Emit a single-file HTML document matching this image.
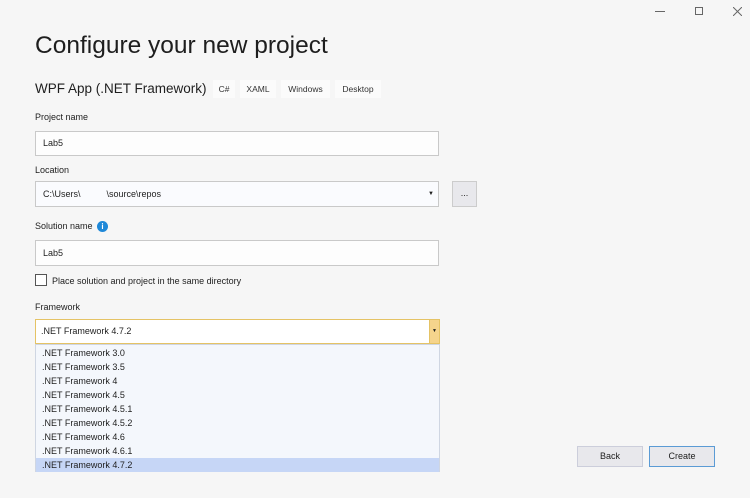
<!DOCTYPE html>
<html><head><meta charset="utf-8"><style>
*{margin:0;padding:0;box-sizing:border-box}
body{width:750px;height:498px;background:#f6f6f6;font-family:"Liberation Sans",sans-serif;color:#1e1e1e;position:relative;overflow:hidden}
.a{position:absolute;white-space:nowrap}
.lbl{font-size:9px;color:#1e1e1e}
.inp{position:absolute;left:35px;width:404px;background:#fdfdfd;border:1px solid #c9c9c9;font-size:9px;padding-left:7px}
.tag{position:absolute;top:80px;height:18px;background:#fbfbfb;font-size:8.5px;line-height:18px;text-align:center;color:#333}
.it{height:14px;line-height:14px;padding-left:6px;font-size:9px}
.btn{position:absolute;top:446px;height:21px;width:66px;background:#e8e8ec;border:1px solid #cccedb;font-size:9px;text-align:center;line-height:19px}
</style></head><body>
<div class="a" style="left:655px;top:11px;width:10px;height:1px;background:#666"></div>
<div class="a" style="left:695px;top:7px;width:8px;height:8px;border:1px solid #666"></div>
<svg class="a" style="left:733px;top:7px" width="9" height="9"><path d="M0 0L9 9M9 0L0 9" stroke="#666" stroke-width="1"/></svg>
<div class="a" style="left:35px;top:32px;font-size:24.5px;color:#1e1e1e">Configure your new project</div>
<div class="a" style="left:35px;top:81px;font-size:13.5px">WPF App (.NET Framework)</div>
<div class="tag" style="left:213px;width:22px">C#</div>
<div class="tag" style="left:240px;width:36px">XAML</div>
<div class="tag" style="left:281px;width:49px">Windows</div>
<div class="tag" style="left:335px;width:46px">Desktop</div>
<div class="a lbl" style="left:35px;top:112px">Project name</div>
<div class="inp" style="top:131px;height:25px;line-height:23px">Lab5</div>
<div class="a lbl" style="left:35px;top:165px">Location</div>
<div class="inp" style="top:181px;height:26px;line-height:24px;background:#fafbfe">C:\Users\<span style="display:inline-block;width:26px"></span>\source\repos<span style="position:absolute;right:4px;top:0;font-size:6px">▼</span></div>
<div class="a" style="left:452px;top:181px;width:25px;height:26px;background:#e8e8ec;border:1px solid #ccc;font-size:9px;text-align:center;line-height:22px">...</div>
<div class="a lbl" style="left:35px;top:221px">Solution name</div>
<div class="a" style="left:97px;top:221px;width:11px;height:11px;border-radius:50%;background:#1e88d8;color:#fff;font-size:8px;font-weight:bold;text-align:center;line-height:11px">i</div>
<div class="inp" style="top:240px;height:26px;line-height:24px">Lab5</div>
<div class="a" style="left:35px;top:274px;width:12px;height:12px;border:1px solid #555;background:#fff"></div>
<div class="a lbl" style="left:52px;top:276px">Place solution and project in the same directory</div>
<div class="a lbl" style="left:35px;top:302px">Framework</div>
<div class="a" style="left:35px;top:319px;width:405px;height:25px;background:#fff;border:1px solid #e5c365;font-size:9px;line-height:23px;padding-left:5px">.NET Framework 4.7.2</div>
<div class="a" style="left:429px;top:319px;width:11px;height:25px;background:#f5d48c;border:1px solid #e5c365;font-size:5px;text-align:center;line-height:23px">▼</div>
<div class="a" style="left:35px;top:344px;width:405px;height:128px;background:#f4f7fc;border:1px solid #cfd6e2;padding-top:1px">
<div class="it">.NET Framework 3.0</div>
<div class="it">.NET Framework 3.5</div>
<div class="it">.NET Framework 4</div>
<div class="it">.NET Framework 4.5</div>
<div class="it">.NET Framework 4.5.1</div>
<div class="it">.NET Framework 4.5.2</div>
<div class="it">.NET Framework 4.6</div>
<div class="it">.NET Framework 4.6.1</div>
<div class="it" style="background:#c6d6f6">.NET Framework 4.7.2</div>
</div>
<div class="btn" style="left:577px">Back</div>
<div class="btn" style="left:649px;border-color:#5b9bd5">Create</div>
</body></html>
